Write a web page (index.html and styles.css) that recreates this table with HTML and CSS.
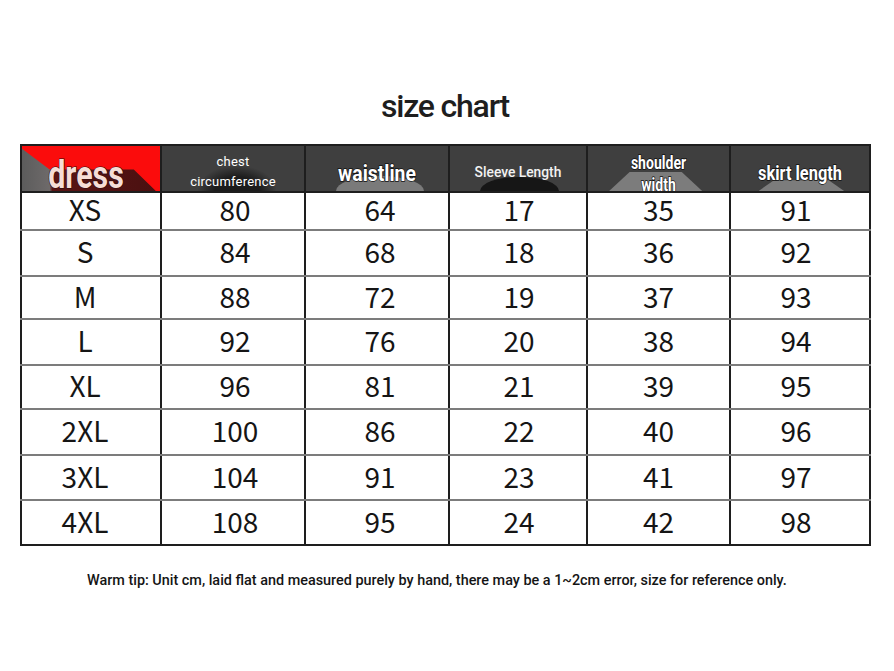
FILE: index.html
```html
<!DOCTYPE html>
<html lang="en">
<head>
<meta charset="utf-8">
<title>size chart</title>
<link rel="stylesheet" href="styles.css">
</head>
<body>
<main class="page">
  <h1 class="title">size chart</h1>
  <table class="chart">
    <colgroup>
      <col class="c1"><col class="c2"><col class="c3"><col class="c4"><col class="c5"><col class="c6">
    </colgroup>
    <thead>
      <tr class="head">
        <th class="h-dress"><span class="hbox dress">dress</span></th>
        <th class="h-chest"><span class="hbox small">chest<br>circumference</span></th>
        <th class="h-waist"><span class="hbox outl waist">waistline</span></th>
        <th class="h-sleeve"><span class="hbox sleeve">Sleeve Length</span></th>
        <th class="h-shoulder"><span class="hbox outl shoulder">shoulder<br>width</span></th>
        <th class="h-skirt"><span class="hbox outl skirt">skirt length</span></th>
      </tr>
    </thead>
    <tbody>
      <tr class="r1"><td>XS</td><td>80</td><td>64</td><td>17</td><td>35</td><td>91</td></tr>
      <tr class="r2"><td>S</td><td>84</td><td>68</td><td>18</td><td>36</td><td>92</td></tr>
      <tr class="r3"><td>M</td><td>88</td><td>72</td><td>19</td><td>37</td><td>93</td></tr>
      <tr class="r4"><td>L</td><td>92</td><td>76</td><td>20</td><td>38</td><td>94</td></tr>
      <tr class="r5"><td>XL</td><td>96</td><td>81</td><td>21</td><td>39</td><td>95</td></tr>
      <tr class="r6"><td>2XL</td><td>100</td><td>86</td><td>22</td><td>40</td><td>96</td></tr>
      <tr class="r7"><td>3XL</td><td>104</td><td>91</td><td>23</td><td>41</td><td>97</td></tr>
      <tr class="r8"><td>4XL</td><td>108</td><td>95</td><td>24</td><td>42</td><td>98</td></tr>
    </tbody>
  </table>
  <p class="tip"><span class="tip-text">Warm tip: Unit cm, laid flat and measured purely by hand, there may be a 1~2cm error, size for reference only.</span></p>
</main>
</body>
</html>
```

FILE: styles.css
```css
html, body {
  margin: 0;
  padding: 0;
  background: #ffffff;
}
.page {
  width: 894px;
  height: 671px;
  padding-top: 87px;
  box-sizing: border-box;
  display: flex;
  flex-direction: column;
  align-items: flex-start;
}
.title {
  align-self: center;
  margin: 0 0 0 -4px;
  font-family: Roboto, "Liberation Sans", sans-serif;
  font-weight: 500;
  font-size: 32px;
  line-height: 38px;
  letter-spacing: -1.2px;
  color: #1e1e1e;
}
.chart {
  margin: 19px 0 0 20px;
  width: 849px;
  border-collapse: collapse;
  table-layout: fixed;
  border: 2px solid #1e1e1e;
  font-family: "Noto Sans CJK SC", "Noto Sans", sans-serif;
}
.c1 { width: 140px; }
.c2 { width: 144px; }
.c3 { width: 144px; }
.c4 { width: 138px; }
.c5 { width: 143px; }
.c6 { width: 140px; }

.head { height: 47px; }
.r1 { height: 38px; }
.r2 { height: 46px; }
.r3 { height: 43px; }
.r4 { height: 46px; }
.r5 { height: 44px; }
.r6 { height: 46px; }
.r7 { height: 45px; }
.r8 { height: 45px; }

th {
  position: relative;
  padding: 0;
  background: #3f3f3f;
  border-left: 2px solid #1e1e1e;
  border-right: 2px solid #1e1e1e;
  border-bottom: 2px solid #1e1e1e;
  color: #ffffff;
  font-weight: normal;
  overflow: hidden;
  vertical-align: top;
}
th::before {
  content: "";
  position: absolute;
  z-index: 0;
}
.hbox {
  position: relative;
  z-index: 1;
  display: block;
  box-sizing: border-box;
  height: 44px;
  overflow: visible;
}
td {
  padding: 0 0 4px 0;
  text-align: center;
  vertical-align: middle;
  border-left: 2px solid #1e1e1e;
  border-right: 2px solid #1e1e1e;
  border-top: 2px solid #7c7c7c;
  border-bottom: 2px solid #7c7c7c;
  font-size: 28px;
  line-height: 30px;
  color: #151515;
  font-weight: 400;
}
td:nth-child(1) { padding-right: 12px; }
td:nth-child(2) { padding-left: 4px; }
td:nth-child(3) { padding-left: 6px; }
td:nth-child(4) { padding-left: 2px; }
td:nth-child(6) { padding-right: 8px; }
tbody tr:first-child td { border-top-color: #1e1e1e; }
tbody tr:last-child td { border-bottom-color: #1e1e1e; }

.h-dress {
  background: #fb0c0c;
}
.h-dress::before {
  left: 0; top: 0; width: 100%; height: 100%;
  background: linear-gradient(90deg, #5c5c5c, #6e6a6a 20%, #5a1515 22%, #4a1010 100%);
  clip-path: polygon(0 6%, 20% 52%, 81% 52%, 97% 100%, 0 100%);
}
.dress {
  font-family: Roboto, "Liberation Sans", sans-serif;
  font-weight: 700;
  font-size: 38px;
  line-height: 40px;
  padding-top: 9px;
  color: #f6ddd6;
  -webkit-text-stroke: 1.2px #2a0a0a;
  paint-order: stroke fill;
  transform: translateX(-5px) scaleX(0.8);
}

.h-chest::before {
  left: 25%; bottom: 0; width: 55%; height: 55%;
  background: radial-gradient(ellipse at 50% 100%, #1c1c1c 40%, rgba(40,40,40,0) 72%);
}
.small {
  font-family: Roboto, "Liberation Sans", sans-serif;
  font-size: 13px;
  line-height: 20px;
  padding-top: 6px;
  letter-spacing: 0.2px;
}
.h-waist::before {
  left: 21%; bottom: 0; width: 62%; height: 34%;
  background: #7a7a7a;
  border-radius: 50% 50% 0 0 / 100% 100% 0 0;
}
.outl {
  font-family: Roboto, "Liberation Sans", sans-serif;
  font-weight: 700;
  color: #ffffff;
  -webkit-text-stroke: 1.4px #111;
  paint-order: stroke fill;
}
.waist {
  font-size: 22px;
  line-height: 26px;
  padding-top: 15px;
  transform: scaleX(0.88);
}
.h-sleeve::before {
  left: 22%; bottom: 0; width: 58%; height: 32%;
  background: #161616;
  border-radius: 50% 50% 0 0 / 100% 100% 0 0;
}
.sleeve {
  font-family: Roboto, "Liberation Sans", sans-serif;
  font-size: 15px;
  font-weight: 500;
  line-height: 18px;
  padding-top: 17px;
  color: #f2f2f2;
  transform: scaleX(0.92);
}
.h-shoulder::before {
  left: 15%; bottom: 0; width: 66%; height: 42%;
  background: #7c7c7c;
  clip-path: polygon(22% 0, 78% 0, 100% 100%, 0 100%);
}
.shoulder {
  font-size: 18px;
  line-height: 22px;
  padding-top: 6px;
  transform: scaleX(0.78);
}
.h-skirt::before {
  left: 20%; bottom: 0; width: 62%; height: 24%;
  background: #7c7c7c;
  clip-path: polygon(18% 0, 82% 0, 100% 100%, 0 100%);
}
.skirt {
  font-size: 20px;
  line-height: 24px;
  padding-top: 15px;
  transform: scaleX(0.82);
}

.tip {
  align-self: stretch;
  margin: 25px 0 0 0;
  height: 18px;
  padding-left: 87px;
}
.tip-text {
  display: inline-block;
  white-space: nowrap;
  font-family: Roboto, "Liberation Sans", sans-serif;
  font-weight: 500;
  font-size: 15px;
  line-height: 18px;
  color: #151515;
  transform: scaleX(0.96);
  transform-origin: 0 50%;
}
```
